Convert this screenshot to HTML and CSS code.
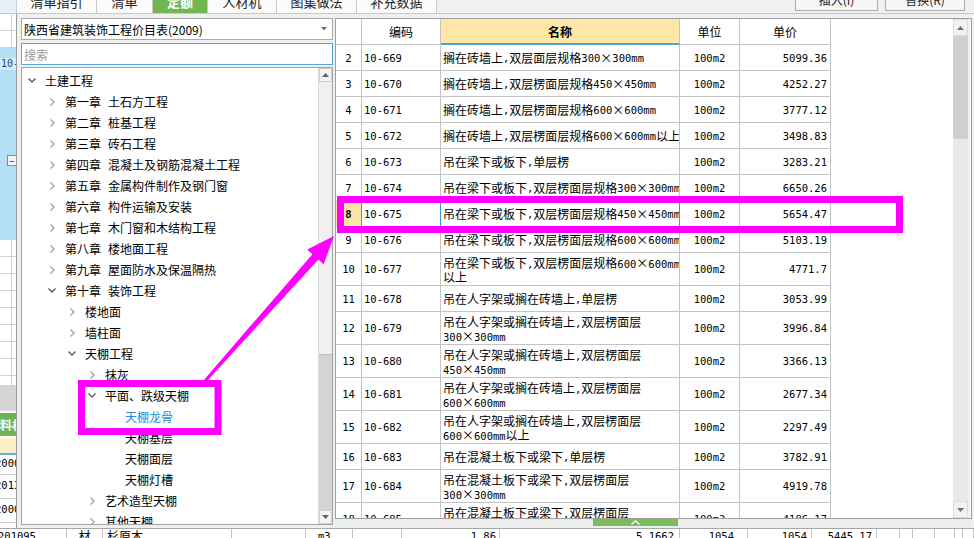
FILE: index.html
```html
<!DOCTYPE html>
<html lang="zh-CN">
<head>
<meta charset="utf-8">
<title>定额</title>
<link rel="stylesheet" href="styles.css">
</head>
<body>
<div class="app">
  <div class="topbar">
    <div class="tb-corner"></div>
    <div class="tabs">
      <div class="tab w80">清单指引</div>
      <div class="tab w56">清单</div>
      <div class="tab active w55">定额</div>
      <div class="tab w69">人材机</div>
      <div class="tab w80">图集做法</div>
      <div class="tab w80">补充数据</div>
    </div>
    <div class="tb-fill"></div>
    <div class="tbtn w83">插入(I)</div>
    <div class="tbtn w80">替换(R)</div>
  </div>

  <div class="main">
    <div class="strip">
      <div class="s-grid s-a"></div>
      <div class="s-blue">
        <div class="s-cell">10-</div>
        <div class="s-minus">−</div>
      </div>
      <div class="s-grid s-c"></div>
      <div class="s-gray"></div>
      <div class="s-gap"></div>
      <div class="s-green">料机</div>
      <div class="s-gap"></div>
      <div class="s-yellow"></div>
      <div class="s-cyan"></div>
      <div class="s-rows">
        <div class="s-row">20001</div>
        <div class="s-row">20131</div>
        <div class="s-row">20001</div>
      </div>
    </div>

    <div class="dialog">
      <div class="left">
        <div class="combo">
          <span>陕西省建筑装饰工程价目表(2009)</span>
          <svg class="combo-arrow" width="6" height="4" viewBox="0 0 6 4"><path d="M0 0 H6 L3 3.5 Z" fill="#707070"/></svg>
        </div>
        <div class="search">搜索</div>
        <div class="tree">
          <div class="tree-list">
            <div class="titem l0"><span class="chev"><svg width="8" height="5" viewBox="0 0 8 5"><path d="M0.5 0.5 L4 4 L7.5 0.5" class="cd"/></svg></span><span>土建工程</span></div>
            <div class="titem l1"><span class="chev"><svg width="5" height="8" viewBox="0 0 5 8"><path d="M0.5 0.5 L4 4 L0.5 7.5" class="cr"/></svg></span><span><span class="ch">第一章</span>土石方工程</span></div>
            <div class="titem l1"><span class="chev"><svg width="5" height="8" viewBox="0 0 5 8"><path d="M0.5 0.5 L4 4 L0.5 7.5" class="cr"/></svg></span><span><span class="ch">第二章</span>桩基工程</span></div>
            <div class="titem l1"><span class="chev"><svg width="5" height="8" viewBox="0 0 5 8"><path d="M0.5 0.5 L4 4 L0.5 7.5" class="cr"/></svg></span><span><span class="ch">第三章</span>砖石工程</span></div>
            <div class="titem l1"><span class="chev"><svg width="5" height="8" viewBox="0 0 5 8"><path d="M0.5 0.5 L4 4 L0.5 7.5" class="cr"/></svg></span><span><span class="ch">第四章</span>混凝土及钢筋混凝土工程</span></div>
            <div class="titem l1"><span class="chev"><svg width="5" height="8" viewBox="0 0 5 8"><path d="M0.5 0.5 L4 4 L0.5 7.5" class="cr"/></svg></span><span><span class="ch">第五章</span>金属构件制作及钢门窗</span></div>
            <div class="titem l1"><span class="chev"><svg width="5" height="8" viewBox="0 0 5 8"><path d="M0.5 0.5 L4 4 L0.5 7.5" class="cr"/></svg></span><span><span class="ch">第六章</span>构件运输及安装</span></div>
            <div class="titem l1"><span class="chev"><svg width="5" height="8" viewBox="0 0 5 8"><path d="M0.5 0.5 L4 4 L0.5 7.5" class="cr"/></svg></span><span><span class="ch">第七章</span>木门窗和木结构工程</span></div>
            <div class="titem l1"><span class="chev"><svg width="5" height="8" viewBox="0 0 5 8"><path d="M0.5 0.5 L4 4 L0.5 7.5" class="cr"/></svg></span><span><span class="ch">第八章</span>楼地面工程</span></div>
            <div class="titem l1"><span class="chev"><svg width="5" height="8" viewBox="0 0 5 8"><path d="M0.5 0.5 L4 4 L0.5 7.5" class="cr"/></svg></span><span><span class="ch">第九章</span>屋面防水及保温隔热</span></div>
            <div class="titem l1"><span class="chev"><svg width="8" height="5" viewBox="0 0 8 5"><path d="M0.5 0.5 L4 4 L7.5 0.5" class="cd"/></svg></span><span><span class="ch">第十章</span>装饰工程</span></div>
            <div class="titem l2"><span class="chev"><svg width="5" height="8" viewBox="0 0 5 8"><path d="M0.5 0.5 L4 4 L0.5 7.5" class="cr"/></svg></span><span>楼地面</span></div>
            <div class="titem l2"><span class="chev"><svg width="5" height="8" viewBox="0 0 5 8"><path d="M0.5 0.5 L4 4 L0.5 7.5" class="cr"/></svg></span><span>墙柱面</span></div>
            <div class="titem l2"><span class="chev"><svg width="8" height="5" viewBox="0 0 8 5"><path d="M0.5 0.5 L4 4 L7.5 0.5" class="cd"/></svg></span><span>天棚工程</span></div>
            <div class="titem l3"><span class="chev"><svg width="5" height="8" viewBox="0 0 5 8"><path d="M0.5 0.5 L4 4 L0.5 7.5" class="cr"/></svg></span><span>抹灰</span></div>
            <div class="titem l3"><span class="chev"><svg width="8" height="5" viewBox="0 0 8 5"><path d="M0.5 0.5 L4 4 L7.5 0.5" class="cd"/></svg></span><span>平面、跌级天棚</span></div>
            <div class="titem l4 sel"><span class="chev"></span><span>天棚龙骨</span></div>
            <div class="titem l4"><span class="chev"></span><span>天棚基层</span></div>
            <div class="titem l4"><span class="chev"></span><span>天棚面层</span></div>
            <div class="titem l4"><span class="chev"></span><span>天棚灯槽</span></div>
            <div class="titem l3"><span class="chev"><svg width="5" height="8" viewBox="0 0 5 8"><path d="M0.5 0.5 L4 4 L0.5 7.5" class="cr"/></svg></span><span>艺术造型天棚</span></div>
            <div class="titem l3"><span class="chev"><svg width="5" height="8" viewBox="0 0 5 8"><path d="M0.5 0.5 L4 4 L0.5 7.5" class="cr"/></svg></span><span>其他天棚</span></div>
          </div>
          <div class="tsb">
            <div class="tsb-btn"><svg width="7" height="4" viewBox="0 0 7 4"><path d="M0 4 L3.5 0 L7 4 Z" fill="#606060"/></svg></div>
            <div class="tsb-thumb"></div>
            <div class="tsb-track"></div>
            <div class="tsb-btn"><svg width="7" height="4" viewBox="0 0 7 4"><path d="M0 0 L3.5 4 L7 0 Z" fill="#606060"/></svg></div>
          </div>
        </div>
      </div>

      <div class="right">
        <div class="table">
          <div class="grid">
            <div class="row hd">
              <div class="c"></div>
              <div class="c hc">编码</div>
              <div class="c hc hname">名称</div>
              <div class="c hc">单位</div>
              <div class="c hc">单价</div>
            </div>
            <div class="row"><div class="c n">2</div><div class="c k">10-669</div><div class="c m">搁在砖墙上<span class="a">,</span>双层面层规格<span class="a">300</span>×<span class="a">300mm</span></div><div class="c u">100m2</div><div class="c p">5099.36</div></div>
            <div class="row"><div class="c n">3</div><div class="c k">10-670</div><div class="c m">搁在砖墙上<span class="a">,</span>双层楞面层规格<span class="a">450</span>×<span class="a">450mm</span></div><div class="c u">100m2</div><div class="c p">4252.27</div></div>
            <div class="row"><div class="c n">4</div><div class="c k">10-671</div><div class="c m">搁在砖墙上<span class="a">,</span>双层楞面层规格<span class="a">600</span>×<span class="a">600mm</span></div><div class="c u">100m2</div><div class="c p">3777.12</div></div>
            <div class="row"><div class="c n">5</div><div class="c k">10-672</div><div class="c m">搁在砖墙上<span class="a">,</span>双层楞面层规格<span class="a">600</span>×<span class="a">600mm</span>以上</div><div class="c u">100m2</div><div class="c p">3498.83</div></div>
            <div class="row"><div class="c n">6</div><div class="c k">10-673</div><div class="c m">吊在梁下或板下<span class="a">,</span>单层楞</div><div class="c u">100m2</div><div class="c p">3283.21</div></div>
            <div class="row"><div class="c n">7</div><div class="c k">10-674</div><div class="c m">吊在梁下或板下<span class="a">,</span>双层楞面层规格<span class="a">300</span>×<span class="a">300mm</span></div><div class="c u">100m2</div><div class="c p">6650.26</div></div>
            <div class="row cur"><div class="c n">8</div><div class="c k">10-675</div><div class="c m">吊在梁下或板下<span class="a">,</span>双层楞面层规格<span class="a">450</span>×<span class="a">450mm</span></div><div class="c u">100m2</div><div class="c p">5654.47</div></div>
            <div class="row"><div class="c n">9</div><div class="c k">10-676</div><div class="c m">吊在梁下或板下<span class="a">,</span>双层楞面层规格<span class="a">600</span>×<span class="a">600mm</span></div><div class="c u">100m2</div><div class="c p">5103.19</div></div>
            <div class="row h2"><div class="c n">10</div><div class="c k">10-677</div><div class="c m ml"><span>吊在梁下或板下<span class="a">,</span>双层楞面层规格<span class="a">600</span>×<span class="a">600mm</span><br>以上</span></div><div class="c u">100m2</div><div class="c p">4771.7</div></div>
            <div class="row"><div class="c n">11</div><div class="c k">10-678</div><div class="c m">吊在人字架或搁在砖墙上<span class="a">,</span>单层楞</div><div class="c u">100m2</div><div class="c p">3053.99</div></div>
            <div class="row h2"><div class="c n">12</div><div class="c k">10-679</div><div class="c m ml"><span>吊在人字架或搁在砖墙上<span class="a">,</span>双层楞面层<br><span class="a">300</span>×<span class="a">300mm</span></span></div><div class="c u">100m2</div><div class="c p">3996.84</div></div>
            <div class="row h2"><div class="c n">13</div><div class="c k">10-680</div><div class="c m ml"><span>吊在人字架或搁在砖墙上<span class="a">,</span>双层楞面层<br><span class="a">450</span>×<span class="a">450mm</span></span></div><div class="c u">100m2</div><div class="c p">3366.13</div></div>
            <div class="row h2"><div class="c n">14</div><div class="c k">10-681</div><div class="c m ml"><span>吊在人字架或搁在砖墙上<span class="a">,</span>双层楞面层<br><span class="a">600</span>×<span class="a">600mm</span></span></div><div class="c u">100m2</div><div class="c p">2677.34</div></div>
            <div class="row h2"><div class="c n">15</div><div class="c k">10-682</div><div class="c m ml"><span>吊在人字架或搁在砖墙上<span class="a">,</span>双层楞面层<br><span class="a">600</span>×<span class="a">600mm</span>以上</span></div><div class="c u">100m2</div><div class="c p">2297.49</div></div>
            <div class="row"><div class="c n">16</div><div class="c k">10-683</div><div class="c m">吊在混凝土板下或梁下<span class="a">,</span>单层楞</div><div class="c u">100m2</div><div class="c p">3782.91</div></div>
            <div class="row h2"><div class="c n">17</div><div class="c k">10-684</div><div class="c m ml"><span>吊在混凝土板下或梁下<span class="a">,</span>双层楞面层<br><span class="a">300</span>×<span class="a">300mm</span></span></div><div class="c u">100m2</div><div class="c p">4919.78</div></div>
            <div class="row h2"><div class="c n">18</div><div class="c k">10-685</div><div class="c m ml"><span>吊在混凝土板下或梁下<span class="a">,</span>双层楞面层<br><span class="a">450</span>×<span class="a">450mm</span></span></div><div class="c u">100m2</div><div class="c p">4186.17</div></div>
          </div>
          <div class="vsb">
            <div class="vsb-col">
              <div class="vsb-btn"><svg width="7" height="4" viewBox="0 0 7 4"><path d="M0 4 L3.5 0 L7 4 Z" fill="#707070"/></svg></div>
              <div class="vsb-thumb"></div>
              <div class="vsb-track"></div>
              <div class="vsb-btn"><svg width="7" height="4" viewBox="0 0 7 4"><path d="M0 0 L3.5 4 L7 0 Z" fill="#707070"/></svg></div>
            </div>
          </div>
        </div>
        <div class="hbar">
          <div class="handle"><svg width="9" height="5" viewBox="0 0 9 5"><path d="M0.5 4.5 L4.5 0.8 L8.5 4.5" fill="none" stroke="#fff" stroke-width="1.3"/></svg></div>
        </div>
      </div>
    </div>
  </div>

  <div class="bottom">
    <div class="b b1">201095</div>
    <div class="b b2">材</div>
    <div class="b b3">杉原木</div>
    <div class="b b4"></div>
    <div class="b b5">m3</div>
    <div class="b b6"></div>
    <div class="b b7 num">1.86</div>
    <div class="b b8 num">5.1662</div>
    <div class="b b9 num">1054</div>
    <div class="b b10 num">1054</div>
    <div class="b b11 num">5445.17</div>
    <div class="b"></div>
    <div class="b"></div>
    <div class="b"></div>
    <div class="b"></div>
    <div class="b"></div>
    <div class="b"></div>
  </div>
</div>

<svg class="overlay" width="974" height="538" viewBox="0 0 974 538">
  <rect x="81.5" y="383.5" width="136.5" height="48" fill="none" stroke="#ff00ff" stroke-width="7"/>
  <rect x="340.5" y="199.5" width="559" height="30" fill="none" stroke="#ff00ff" stroke-width="7"/>
  <polygon points="203.9,380 312.4,254.2 307.2,249.6 334,236 323.6,264.2 318.4,259.6 206.1,382" fill="#ff00ff"/>
</svg>
</body>
</html>
```

FILE: styles.css
```css
* { box-sizing: border-box; }
html, body { margin: 0; padding: 0; }
body {
  width: 974px;
  height: 538px;
  overflow: hidden;
  position: relative;
  background: #fff;
  font-family: "Noto Sans CJK SC", "Noto Sans", sans-serif;
  font-size: 12px;
  color: #000;
}
.app { display: flex; flex-direction: column; height: 538px; }

/* top tab strip */
.topbar {
  height: 14px;
  display: flex;
  background: #f0f0f0;
  border-bottom: 1px solid #b7d7a3;
}
.tb-corner {
  width: 17px;
  background: #e3f0f9;
  border-right: 1px solid #c4d2dc;
}
.tabs { display: flex; }
.tab {
  height: 13px;
  overflow: hidden;
  background: #fbfbfb;
  border-right: 1px solid #c9c9c9;
  font-size: 13px;
  line-height: 3px;
  text-align: center;
  color: #222;
}
.tab.active { background: #70b652; color: #fff; font-weight: bold; }
.w80 { width: 80px; }
.w56 { width: 56px; }
.w55 { width: 55px; }
.w69 { width: 69px; }
.w83 { width: 83px; }
.tb-fill { flex: 1; }
.tbtn {
  height: 11px;
  overflow: hidden;
  border: 1px solid #acacac;
  border-top: none;
  background: #f6f6f6;
  font-size: 12px;
  line-height: 0;
  text-align: center;
  margin-right: 7px;
  color: #222;
}
.tbtn + .tbtn { margin-right: 9px; }

/* main area */
.main { display: flex; height: 514px; }

/* underlying sheet strip on the far left */
.strip { width: 16px; display: flex; flex-direction: column; overflow: hidden; background: #fff; }
.s-grid {
  background-color: #fff;
  background-image:
    repeating-linear-gradient(to bottom, transparent 0 16px, #d2d2d2 16px 17px),
    linear-gradient(to right, transparent 0 11px, #d2d2d2 11px 12px, transparent 12px);
}
.s-a { height: 34px; }
.s-c { height: 145px; }
.s-blue { height: 192px; background: #b4e0f5; display: flex; flex-direction: column; }
.s-cell {
  margin-top: 10px;
  height: 12px;
  background: #d4ecfa;
  font-family: "DejaVu Sans Mono", monospace;
  font-size: 10px;
  line-height: 12px;
  color: #1b4a7a;
  white-space: nowrap;
  overflow: hidden;
  padding-left: 1px;
}
.s-minus {
  margin-top: 85px;
  margin-left: 7px;
  width: 10px;
  height: 11px;
  border: 1px solid #8a8a8a;
  background: #f4f4f4;
  font-size: 10px;
  line-height: 9px;
  color: #333;
  overflow: hidden;
  padding-left: 1px;
}
.s-gray { height: 26px; background: #d6d6d6; }
.s-gap { height: 2px; background: #fff; }
.s-green {
  height: 23px;
  background: #6db34f;
  color: #fff;
  font-weight: bold;
  font-size: 12px;
  line-height: 23px;
  white-space: nowrap;
  overflow: hidden;
}
.s-yellow { height: 15px; background: #fdf0c6; }
.s-cyan { height: 2px; background: #62b2d2; }
.s-rows { flex: 1; display: flex; flex-direction: column; }
.s-row {
  height: 24px;
  border-bottom: 1px solid #c8c8c8;
  font-family: "DejaVu Sans Mono", monospace;
  font-size: 10.5px;
  line-height: 20px;
  white-space: nowrap;
  overflow: hidden;
  text-indent: -5px;
}
.s-row:first-child { height: 20px; line-height: 16px; }

/* dialog */
.dialog {
  flex: 1;
  display: flex;
  gap: 2px;
  background: #f0f0f0;
  border-left: 1px solid #9c9c9c;
  padding: 4px 2px 0 4px;
}
.left { width: 312px; display: flex; flex-direction: column; padding-bottom: 3px; }
.combo {
  height: 22px;
  border: 1px solid #ababab;
  background: #fff;
  display: flex;
  align-items: center;
  justify-content: space-between;
  padding: 0 5px 0 2px;
  white-space: nowrap;
}
.combo-arrow { display: block; }
.search {
  margin-top: 3px;
  height: 22px;
  border: 1px solid #56a7dc;
  background: #fff;
  color: #9a9a9a;
  padding-left: 2px;
  display: flex;
  align-items: center;
}
.tree {
  margin-top: 2px;
  flex: 1;
  border: 1px solid #a3a3a3;
  background: #fff;
  display: flex;
  overflow: hidden;
}
.tree-list { flex: 1; padding-top: 2px; overflow: hidden; }
.titem { height: 21px; display: flex; align-items: center; white-space: nowrap; }
.titem.l0 { padding-left: 6px; }
.titem.l1 { padding-left: 26px; }
.titem.l2 { padding-left: 46px; }
.titem.l3 { padding-left: 66px; }
.titem.l4 { padding-left: 86px; }
.chev {
  width: 8px;
  height: 8px;
  margin-right: 9px;
  display: flex;
  align-items: center;
  justify-content: center;
  flex: none;
}
.chev svg { display: block; }
.cd { fill: none; stroke: #555; stroke-width: 1.3; }
.cr { fill: none; stroke: #a0a0a0; stroke-width: 1.3; }
.ch { margin-right: 7px; }
.titem.sel { color: #2a8ad6; }

.tsb {
  width: 14px;
  display: flex;
  flex-direction: column;
  border-left: 1px solid #dadada;
  background: #f2f2f2;
}
.tsb-btn {
  height: 14px;
  display: flex;
  align-items: center;
  justify-content: center;
  background: #f4f4f4;
  border: 1px solid #d0d0d0;
}
.tsb-thumb { height: 273px; background: #f0f0f0; border-bottom: 1px solid #bdbdbd; }
.tsb-track { flex: 1; background: #d4d4d4; }

/* right table */
.right { flex: 1; display: flex; flex-direction: column; }
.table {
  flex: 1;
  border: 1px solid #a0a0a0;
  background: #fff;
  display: flex;
  overflow: hidden;
}
.grid { flex: 1; overflow: hidden; }
.row {
  display: grid;
  grid-template-columns: 26px 79px 239px 60px 91px;
  height: 26px;
}
.row.hd { height: 26px; }
.row.h2 { height: 33px; }
.c {
  border-right: 1px solid #c4c4c4;
  border-bottom: 1px solid #c4c4c4;
  display: flex;
  align-items: center;
  overflow: hidden;
  white-space: nowrap;
}
.hc { justify-content: center; font-size: 12px; }
.hname {
  background: #fde8a8;
  font-weight: bold;
  border-bottom: 2px solid #4fa5cf;
}
.n, .k, .u, .p, .a {
  font-family: "DejaVu Sans Mono", monospace;
  font-size: 10.5px;
}
.n { justify-content: center; }
.k { padding-left: 2px; }
.m { padding-left: 2px; }
.u { justify-content: center; }
.p { justify-content: flex-end; padding-right: 3px; }
.ml { align-items: flex-start; padding-top: 3px; }
.ml > span { line-height: 14px; }
.ml .a { line-height: 0; }

.row.cur .n { background: #fbe3a4; font-weight: bold; border-right-color: #3d9bd6; }
.row.cur .k { border-right-color: #3d9bd6; }
.row.cur .m { border-right-color: #3d9bd6; border-bottom-color: #3d9bd6; box-shadow: inset 0 1px 0 #3d9bd6; }

.vsb { width: 18px; background: #f4f4f4; padding-right: 3px; display: flex; }
.vsb-col { flex: 1; display: flex; flex-direction: column; }
.vsb-btn {
  height: 17px;
  display: flex;
  align-items: center;
  justify-content: center;
  background: #f2f2f2;
  border: 1px solid #dcdcdc;
}
.vsb-thumb { height: 103px; background: #cfcfcf; border-radius: 0 0 2px 2px; }
.vsb-track { flex: 1; background: #e9e9e9; }

.hbar { height: 9px; background: #ededed; display: flex; }
.handle {
  margin-left: 258px;
  width: 85px;
  height: 7px;
  background: #78bc5c;
  display: flex;
  align-items: center;
  justify-content: center;
}
.handle svg { display: block; }

/* bottom row of the sheet below the dialog */
.bottom {
  height: 10px;
  border-top: 1px solid #a8a8a8;
  display: grid;
  grid-template-columns: 67px 36px 129px 74px 47px 49px 98px 180px 68px 64px 65px 23px 13px 22px 20px 8px 11px;
  overflow: hidden;
}
.b {
  border-right: 1px solid #c4c4c4;
  line-height: 14px;
  white-space: nowrap;
  overflow: hidden;
  font-size: 12px;
}
.b.num { font-family: "DejaVu Sans Mono", monospace; font-size: 10.5px; text-align: right; }
.b1 { font-family: "DejaVu Sans Mono", monospace; font-size: 10.5px; text-indent: -2px; }
.b2 { text-align: center; }
.b3 { padding-left: 4px; }
.b5 { padding-left: 12px; font-family: "DejaVu Sans Mono", monospace; font-size: 10.5px; }
.b7 { padding-right: 3px; }
.b8 { padding-right: 5px; }
.b9 { padding-right: 13px; }
.b10 { padding-right: 4px; }
.b11 { padding-right: 4px; }

/* annotation overlay */
.overlay { position: absolute; left: 0; top: 0; pointer-events: none; }
```
